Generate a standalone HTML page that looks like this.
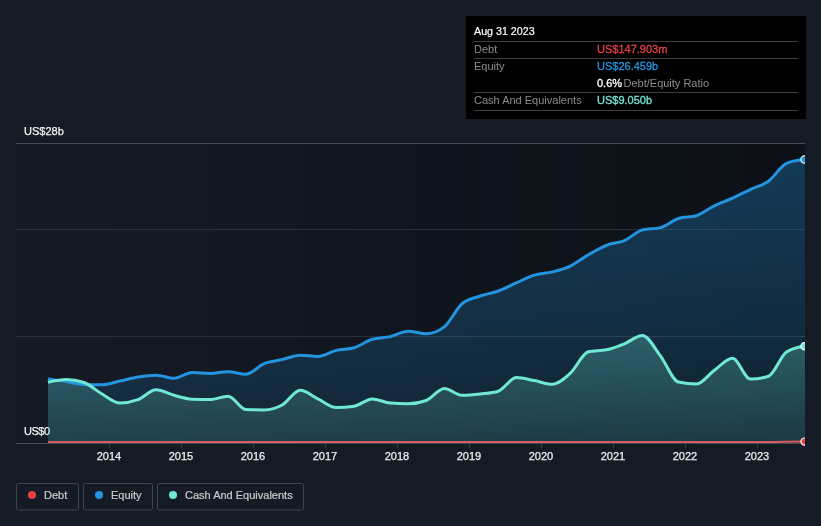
<!DOCTYPE html>
<html><head><meta charset="utf-8"><style>
html,body{margin:0;padding:0;}
body{width:821px;height:526px;background:#151b25;position:relative;overflow:hidden;font-family:"Liberation Sans",sans-serif;}
svg{position:absolute;left:0;top:0;will-change:transform;}
text{font-family:"Liberation Sans",sans-serif;font-size:11px;}
</style></head><body>
<svg width="821" height="526" viewBox="0 0 821 526">
<defs>
<linearGradient id="bg" x1="0" y1="0" x2="1" y2="0">
<stop offset="0" stop-color="#000" stop-opacity="0"/>
<stop offset="1" stop-color="#000" stop-opacity="0.38"/>
</linearGradient>
<linearGradient id="ef" gradientUnits="userSpaceOnUse" x1="0" x2="0" y1="160" y2="443">
<stop offset="0" stop-color="#2394df" stop-opacity="0.32"/>
<stop offset="1" stop-color="#2394df" stop-opacity="0.12"/>
</linearGradient>
<linearGradient id="cf" gradientUnits="userSpaceOnUse" x1="0" x2="0" y1="335" y2="443">
<stop offset="0" stop-color="#71e7d6" stop-opacity="0.28"/>
<stop offset="1" stop-color="#71e7d6" stop-opacity="0.12"/>
</linearGradient>
<clipPath id="clip"><rect x="16" y="100" width="789" height="360"/></clipPath>
</defs>
<g fill="#f4f4f4" stroke="#f4f4f4" stroke-width="0.25">
<text x="24" y="134.5">US$28b</text>
<text x="24" y="434.5" letter-spacing="-0.5">US$0</text>
</g>
<rect x="16" y="143" width="789" height="300" fill="url(#bg)"/>
<g stroke="#2a2f38" stroke-width="1">
<line x1="16" y1="229.5" x2="805" y2="229.5"/>
<line x1="16" y1="336.5" x2="805" y2="336.5"/>
</g>
<g stroke="#474b53" stroke-width="1">
<line x1="16" y1="143.5" x2="805" y2="143.5"/>
<line x1="16" y1="443.5" x2="805" y2="443.5"/>
</g>
<g stroke="#3a3f47" stroke-width="1"><line x1="109.5" y1="444" x2="109.5" y2="448"/><line x1="181.5" y1="444" x2="181.5" y2="448"/><line x1="253.5" y1="444" x2="253.5" y2="448"/><line x1="325.5" y1="444" x2="325.5" y2="448"/><line x1="397.5" y1="444" x2="397.5" y2="448"/><line x1="469.5" y1="444" x2="469.5" y2="448"/><line x1="541.5" y1="444" x2="541.5" y2="448"/><line x1="613.5" y1="444" x2="613.5" y2="448"/><line x1="685.5" y1="444" x2="685.5" y2="448"/><line x1="757.5" y1="444" x2="757.5" y2="448"/></g>
<g clip-path="url(#clip)">
<path d="M48.0,379.1C54.0,379.9,60.0,380.6,66.0,381.5C72.0,382.4,78.0,384.2,84.0,384.4C90.0,384.6,96.0,384.7,102.0,384.7C108.0,384.7,114.0,382.3,120.0,381.0C126.1,379.7,132.1,378.0,138.1,377.0C144.1,376.0,150.1,375.2,156.1,375.2C162.1,375.2,168.1,378.3,174.1,378.3C180.1,378.3,186.1,372.5,192.1,372.5C198.1,372.5,204.1,373.4,210.1,373.4C216.1,373.4,222.1,371.7,228.1,371.7C234.1,371.7,240.1,374.2,246.1,374.2C252.1,374.2,258.1,366.1,264.1,363.6C270.1,361.2,276.2,360.9,282.2,359.5C288.2,358.1,294.2,355.2,300.2,355.2C306.2,355.2,312.2,356.5,318.2,356.5C324.2,356.5,330.2,351.9,336.2,350.4C342.2,348.9,348.2,349.5,354.2,347.7C360.2,345.9,366.2,341.1,372.2,339.3C378.2,337.5,384.2,337.9,390.2,336.6C396.2,335.3,402.2,331.3,408.2,331.3C414.2,331.3,420.2,333.8,426.2,333.8C432.3,333.8,438.3,331.5,444.3,326.9C450.3,322.3,456.3,308.5,462.3,303.5C468.3,298.5,474.3,298.1,480.3,296.0C486.3,293.9,492.3,293.2,498.3,291.0C504.3,288.8,510.3,285.5,516.3,282.9C522.3,280.2,528.3,276.9,534.3,275.1C540.3,273.3,546.3,273.4,552.3,271.9C558.3,270.4,564.3,269.0,570.3,266.1C576.3,263.2,582.4,258.2,588.4,254.7C594.4,251.2,600.4,247.7,606.4,245.3C612.4,242.9,618.4,243.2,624.4,240.6C630.4,238.0,636.4,231.4,642.4,229.9C648.4,228.4,654.4,229.1,660.4,227.6C666.4,226.1,672.4,220.4,678.4,218.5C684.4,216.6,690.4,217.6,696.4,215.7C702.4,213.8,708.4,208.7,714.4,205.8C720.4,202.9,726.4,200.9,732.5,198.2C738.5,195.5,744.5,192.2,750.5,189.4C756.5,186.6,762.5,185.5,768.5,181.2C774.5,176.8,780.5,165.9,786.5,163.3C792.5,160.7,798.5,160.1,804.5,159.4L806,159.4L806,443L48.0,443Z" fill="url(#ef)"/>
<path d="M48.0,382.3C54.0,380.9,60.0,379.5,66.0,379.5C72.0,379.5,78.0,380.5,84.0,382.5C90.0,384.5,96.0,390.6,102.0,394.0C108.0,397.4,114.0,402.9,120.0,402.9C126.1,402.9,132.1,401.8,138.1,399.6C144.1,397.4,150.1,389.8,156.1,389.8C162.1,389.8,168.1,393.7,174.1,395.3C180.1,396.9,186.1,398.9,192.1,399.2C198.1,399.5,204.1,399.6,210.1,399.6C216.1,399.6,222.1,396.2,228.1,396.2C234.1,396.2,240.1,409.4,246.1,409.6C252.1,409.8,258.1,409.9,264.1,409.9C270.1,409.9,276.2,408.3,282.2,405.0C288.2,401.7,294.2,390.2,300.2,390.2C306.2,390.2,312.2,396.1,318.2,399.0C324.2,401.9,330.2,407.5,336.2,407.5C342.2,407.5,348.2,407.1,354.2,406.2C360.2,405.3,366.2,398.9,372.2,398.9C378.2,398.9,384.2,402.6,390.2,403.1C396.2,403.6,402.2,403.8,408.2,403.8C414.2,403.8,420.2,402.7,426.2,400.5C432.3,398.3,438.3,388.6,444.3,388.6C450.3,388.6,456.3,395.3,462.3,395.3C468.3,395.3,474.3,394.7,480.3,394.0C486.3,393.3,492.3,393.1,498.3,391.2C504.3,389.3,510.3,377.6,516.3,377.6C522.3,377.6,528.3,379.5,534.3,380.6C540.3,381.7,546.3,384.3,552.3,384.3C558.3,384.3,564.3,378.6,570.3,373.2C576.3,367.8,582.4,353.1,588.4,351.8C594.4,350.5,600.4,351.1,606.4,349.8C612.4,348.5,618.4,346.2,624.4,343.8C630.4,341.4,636.4,335.5,642.4,335.5C648.4,335.5,654.4,348.1,660.4,355.8C666.4,363.6,672.4,380.6,678.4,382.0C684.4,383.4,690.4,384.1,696.4,384.1C702.4,384.1,708.4,374.6,714.4,370.3C720.4,366.0,726.4,358.3,732.5,358.3C738.5,358.3,744.5,379.1,750.5,379.1C756.5,379.1,762.5,378.1,768.5,376.2C774.5,374.3,780.5,355.9,786.5,352.0C792.5,348.1,798.5,347.2,804.5,346.2L806,346.2L806,443L48.0,443Z" fill="url(#cf)"/>
<path d="M48.0,442.0C54.0,442.0,60.0,442.0,66.0,442.0C72.0,442.0,78.0,442.0,84.0,442.0C90.0,442.0,96.0,442.0,102.0,442.0C108.0,442.0,114.0,442.0,120.0,442.0C126.1,442.0,132.1,442.0,138.1,442.0C144.1,442.0,150.1,442.0,156.1,442.0C162.1,442.0,168.1,442.0,174.1,442.0C180.1,442.0,186.1,442.0,192.1,442.0C198.1,442.0,204.1,442.0,210.1,442.0C216.1,442.0,222.1,442.0,228.1,442.0C234.1,442.0,240.1,442.0,246.1,442.0C252.1,442.0,258.1,442.0,264.1,442.0C270.1,442.0,276.2,442.0,282.2,442.0C288.2,442.0,294.2,442.0,300.2,442.0C306.2,442.0,312.2,442.0,318.2,442.0C324.2,442.0,330.2,442.0,336.2,442.0C342.2,442.0,348.2,442.0,354.2,442.0C360.2,442.0,366.2,442.0,372.2,442.0C378.2,442.0,384.2,442.0,390.2,442.0C396.2,442.0,402.2,442.0,408.2,442.0C414.2,442.0,420.2,442.0,426.2,442.0C432.3,442.0,438.3,442.0,444.3,442.0C450.3,442.0,456.3,442.0,462.3,442.0C468.3,442.0,474.3,442.0,480.3,442.0C486.3,442.0,492.3,442.0,498.3,442.0C504.3,442.0,510.3,442.0,516.3,442.0C522.3,442.0,528.3,442.0,534.3,442.0C540.3,442.0,546.3,442.0,552.3,442.0C558.3,442.0,564.3,442.0,570.3,442.0C576.3,442.0,582.4,442.0,588.4,442.0C594.4,442.0,600.4,442.0,606.4,442.0C612.4,442.0,618.4,442.0,624.4,442.0C630.4,442.0,636.4,442.0,642.4,442.0C648.4,442.0,654.4,442.0,660.4,442.0C666.4,442.0,672.4,442.0,678.4,442.0C684.4,442.0,690.4,442.0,696.4,442.0C702.4,442.0,708.4,442.0,714.4,442.0C720.4,442.0,726.4,442.0,732.5,442.0C738.5,442.0,744.5,442.0,750.5,442.0C756.5,442.0,762.5,442.0,768.5,442.0C774.5,442.0,780.5,441.9,786.5,441.8C792.5,441.7,798.5,441.6,804.5,441.5" fill="none" stroke="#d65b62" stroke-width="2"/>
<path d="M48.0,379.1C54.0,379.9,60.0,380.6,66.0,381.5C72.0,382.4,78.0,384.2,84.0,384.4C90.0,384.6,96.0,384.7,102.0,384.7C108.0,384.7,114.0,382.3,120.0,381.0C126.1,379.7,132.1,378.0,138.1,377.0C144.1,376.0,150.1,375.2,156.1,375.2C162.1,375.2,168.1,378.3,174.1,378.3C180.1,378.3,186.1,372.5,192.1,372.5C198.1,372.5,204.1,373.4,210.1,373.4C216.1,373.4,222.1,371.7,228.1,371.7C234.1,371.7,240.1,374.2,246.1,374.2C252.1,374.2,258.1,366.1,264.1,363.6C270.1,361.2,276.2,360.9,282.2,359.5C288.2,358.1,294.2,355.2,300.2,355.2C306.2,355.2,312.2,356.5,318.2,356.5C324.2,356.5,330.2,351.9,336.2,350.4C342.2,348.9,348.2,349.5,354.2,347.7C360.2,345.9,366.2,341.1,372.2,339.3C378.2,337.5,384.2,337.9,390.2,336.6C396.2,335.3,402.2,331.3,408.2,331.3C414.2,331.3,420.2,333.8,426.2,333.8C432.3,333.8,438.3,331.5,444.3,326.9C450.3,322.3,456.3,308.5,462.3,303.5C468.3,298.5,474.3,298.1,480.3,296.0C486.3,293.9,492.3,293.2,498.3,291.0C504.3,288.8,510.3,285.5,516.3,282.9C522.3,280.2,528.3,276.9,534.3,275.1C540.3,273.3,546.3,273.4,552.3,271.9C558.3,270.4,564.3,269.0,570.3,266.1C576.3,263.2,582.4,258.2,588.4,254.7C594.4,251.2,600.4,247.7,606.4,245.3C612.4,242.9,618.4,243.2,624.4,240.6C630.4,238.0,636.4,231.4,642.4,229.9C648.4,228.4,654.4,229.1,660.4,227.6C666.4,226.1,672.4,220.4,678.4,218.5C684.4,216.6,690.4,217.6,696.4,215.7C702.4,213.8,708.4,208.7,714.4,205.8C720.4,202.9,726.4,200.9,732.5,198.2C738.5,195.5,744.5,192.2,750.5,189.4C756.5,186.6,762.5,185.5,768.5,181.2C774.5,176.8,780.5,165.9,786.5,163.3C792.5,160.7,798.5,160.1,804.5,159.4" fill="none" stroke="#2394df" stroke-width="3" stroke-linejoin="round"/>
<path d="M48.0,382.3C54.0,380.9,60.0,379.5,66.0,379.5C72.0,379.5,78.0,380.5,84.0,382.5C90.0,384.5,96.0,390.6,102.0,394.0C108.0,397.4,114.0,402.9,120.0,402.9C126.1,402.9,132.1,401.8,138.1,399.6C144.1,397.4,150.1,389.8,156.1,389.8C162.1,389.8,168.1,393.7,174.1,395.3C180.1,396.9,186.1,398.9,192.1,399.2C198.1,399.5,204.1,399.6,210.1,399.6C216.1,399.6,222.1,396.2,228.1,396.2C234.1,396.2,240.1,409.4,246.1,409.6C252.1,409.8,258.1,409.9,264.1,409.9C270.1,409.9,276.2,408.3,282.2,405.0C288.2,401.7,294.2,390.2,300.2,390.2C306.2,390.2,312.2,396.1,318.2,399.0C324.2,401.9,330.2,407.5,336.2,407.5C342.2,407.5,348.2,407.1,354.2,406.2C360.2,405.3,366.2,398.9,372.2,398.9C378.2,398.9,384.2,402.6,390.2,403.1C396.2,403.6,402.2,403.8,408.2,403.8C414.2,403.8,420.2,402.7,426.2,400.5C432.3,398.3,438.3,388.6,444.3,388.6C450.3,388.6,456.3,395.3,462.3,395.3C468.3,395.3,474.3,394.7,480.3,394.0C486.3,393.3,492.3,393.1,498.3,391.2C504.3,389.3,510.3,377.6,516.3,377.6C522.3,377.6,528.3,379.5,534.3,380.6C540.3,381.7,546.3,384.3,552.3,384.3C558.3,384.3,564.3,378.6,570.3,373.2C576.3,367.8,582.4,353.1,588.4,351.8C594.4,350.5,600.4,351.1,606.4,349.8C612.4,348.5,618.4,346.2,624.4,343.8C630.4,341.4,636.4,335.5,642.4,335.5C648.4,335.5,654.4,348.1,660.4,355.8C666.4,363.6,672.4,380.6,678.4,382.0C684.4,383.4,690.4,384.1,696.4,384.1C702.4,384.1,708.4,374.6,714.4,370.3C720.4,366.0,726.4,358.3,732.5,358.3C738.5,358.3,744.5,379.1,750.5,379.1C756.5,379.1,762.5,378.1,768.5,376.2C774.5,374.3,780.5,355.9,786.5,352.0C792.5,348.1,798.5,347.2,804.5,346.2" fill="none" stroke="#71e7d6" stroke-width="3" stroke-linejoin="round"/>
<circle cx="804.5" cy="159.4" r="3.7" fill="#2394df" stroke="#fff" stroke-width="1.1"/>
<circle cx="804.5" cy="346.2" r="3.7" fill="#71e7d6" stroke="#fff" stroke-width="1.1"/>
<circle cx="804.5" cy="441.6" r="3.6" fill="#e64141" stroke="#fff" stroke-width="1.2"/>
</g>
<g fill="#f0f0f0" stroke="#f0f0f0" stroke-width="0.25" text-anchor="middle" style="font-size:10.8px"><text x="109" y="460">2014</text><text x="181" y="460">2015</text><text x="253" y="460">2016</text><text x="325" y="460">2017</text><text x="397" y="460">2018</text><text x="469" y="460">2019</text><text x="541" y="460">2020</text><text x="613" y="460">2021</text><text x="685" y="460">2022</text><text x="757" y="460">2023</text></g>
<!-- tooltip -->
<rect x="466" y="16" width="340" height="103" fill="#000"/>
<g fill="#3d3d3d">
<rect x="474" y="41" width="324" height="1"/>
<rect x="474" y="58" width="324" height="1"/>
<rect x="474" y="92" width="324" height="1"/>
<rect x="474" y="110" width="324" height="1"/>
</g>
<text x="474" y="35" fill="#fff" stroke="#fff" stroke-width="0.2" style="font-size:10.7px">Aug 31 2023</text>
<g fill="#8c8c8c" style="font-size:10.8px">
<text x="474" y="52.5">Debt</text>
<text x="474" y="70">Equity</text>
<text x="474" y="104">Cash And Equivalents</text>
<text x="623.5" y="87">Debt/Equity Ratio</text>
</g>
<g stroke-width="0.3" style="font-size:10.6px">
<text x="597" y="52.5" fill="#e64141" stroke="#e64141">US$147.903m</text>
<text x="597" y="70" fill="#2394df" stroke="#2394df">US$26.459b</text>
<text x="597" y="87" fill="#fff" stroke="#fff">0.6%</text>
<text x="597" y="104" fill="#71e7d6" stroke="#71e7d6">US$9.050b</text>
</g>
<!-- legend -->
<g fill="none" stroke="#40454e" stroke-width="1">
<rect x="16.5" y="483.5" width="62" height="26.5" rx="2"/>
<rect x="83.5" y="483.5" width="69" height="26.5" rx="2"/>
<rect x="157.5" y="483.5" width="146" height="26.5" rx="2"/>
</g>
<circle cx="32" cy="495" r="4" fill="#e64141"/>
<circle cx="99" cy="495" r="4" fill="#2394df"/>
<circle cx="173" cy="495" r="4" fill="#71e7d6"/>
<g fill="#cdcdcd" stroke="#cdcdcd" stroke-width="0.2" style="font-size:10.9px">
<text x="44" y="499">Debt</text>
<text x="111" y="499">Equity</text>
<text x="185" y="499">Cash And Equivalents</text>
</g>
</svg>
</body></html>
